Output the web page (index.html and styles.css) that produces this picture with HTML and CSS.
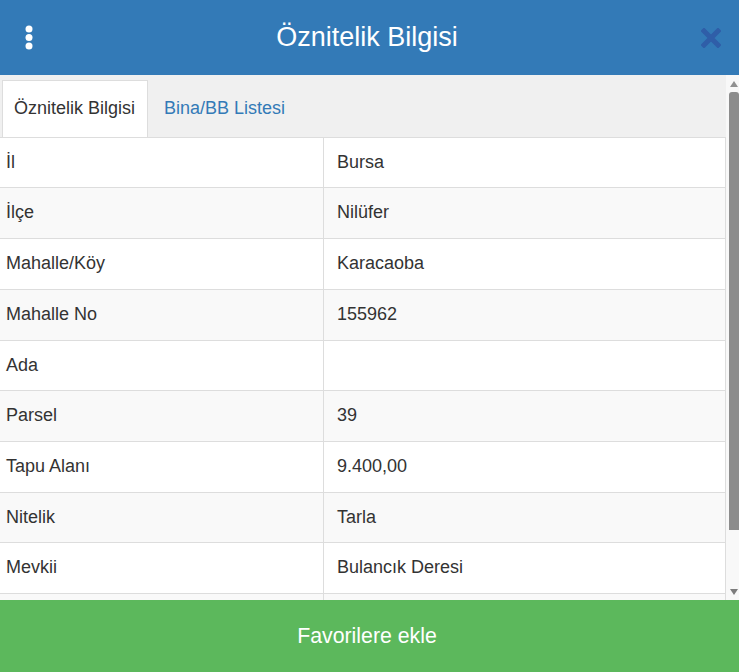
FILE: index.html
```html
<!DOCTYPE html>
<html lang="tr">
<head>
  <meta charset="UTF-8">
  <title>Öznitelik Bilgisi</title>
  <link rel="stylesheet" href="styles.css">
</head>
<body>
  <div class="panel">
    <header class="panel-header">
      <button class="icon-btn menu-btn" aria-label="Menü">
        <svg width="8" height="26" viewBox="0 0 8 26">
          <circle cx="4" cy="4" r="3.5" fill="#fff"/>
          <circle cx="4" cy="12.5" r="3.5" fill="#fff"/>
          <circle cx="4" cy="21" r="3.5" fill="#fff"/>
        </svg>
      </button>
      <h1 class="panel-title">Öznitelik Bilgisi</h1>
      <button class="icon-btn close-btn" aria-label="Kapat">
        <svg width="20" height="20" viewBox="0 0 20 20">
          <path d="M3 3L17 17M17 3L3 17" stroke="#2f5ea8" stroke-width="5" stroke-linecap="square"/>
        </svg>
      </button>
    </header>

    <div class="panel-body">
      <div class="scroll-area">
        <ul class="tabs">
          <li class="tab active">Öznitelik Bilgisi</li>
          <li class="tab">Bina/BB Listesi</li>
        </ul>

        <table class="attr-table">
          <tr><td>İl</td><td>Bursa</td></tr>
          <tr><td>İlçe</td><td>Nilüfer</td></tr>
          <tr><td>Mahalle/Köy</td><td>Karacaoba</td></tr>
          <tr><td>Mahalle No</td><td>155962</td></tr>
          <tr><td>Ada</td><td></td></tr>
          <tr><td>Parsel</td><td>39</td></tr>
          <tr><td>Tapu Alanı</td><td>9.400,00</td></tr>
          <tr><td>Nitelik</td><td>Tarla</td></tr>
          <tr><td>Mevkii</td><td>Bulancık Deresi</td></tr>
          <tr><td></td><td></td></tr>
        </table>
      </div>

      <!-- scrollbar drawn by hand, the browser hides the native one -->
      <div class="scrollbar">
        <div class="sb-btn"><span class="arrow-up"></span></div>
        <div class="sb-track"><div class="sb-thumb"></div></div>
        <div class="sb-btn"><span class="arrow-down"></span></div>
      </div>
    </div>

    <button class="fav-btn">Favorilere ekle</button>
  </div>
</body>
</html>
```

FILE: styles.css
```css
body {
  margin: 0;
  font-family: 'Liberation Sans', Arial, sans-serif;
  font-size: 18px;
  color: #333;
  background: #fff;
}
.panel {
  height: 672px;
  display: flex;
  flex-direction: column;
}
/* Blue title bar */
.panel-header {
  height: 75px;
  flex: none;
  background: #337ab7;
  display: grid;
  grid-template-columns: 55px 1fr 60px;
  align-items: center;
}
.icon-btn {
  border: 0;
  background: none;
  padding: 0;
  display: flex;
  cursor: pointer;
}
.menu-btn {
  padding-left: 25px;
  margin-top: 1px;
}
.close-btn {
  padding-left: 22px;
  margin-top: 1px;
}
.panel-title {
  margin: 0;
  text-align: center;
  font-size: 27px;
  font-weight: normal;
  color: #fff;
}
/* Middle part: content + scrollbar */
.panel-body {
  flex: 1;
  min-height: 0;
  display: flex;
}
.scroll-area {
  flex: 1;
  min-width: 0;
  overflow: hidden;
}
.scrollbar {
  width: 13px;
  flex: none;
  display: flex;
  flex-direction: column;
  background: #f8f8f8;
}
.sb-btn {
  height: 17px;
  flex: none;
  display: flex;
  align-items: center;
  justify-content: center;
  padding-left: 3px;
}
.arrow-up {
  border-left: 4px solid transparent;
  border-right: 4px solid transparent;
  border-bottom: 6px solid #909090;
}
.arrow-down {
  border-left: 4px solid transparent;
  border-right: 4px solid transparent;
  border-top: 6px solid #7c7c7c;
}
.sb-track {
  flex: 1;
}
.sb-thumb {
  height: 438px;
  margin-left: 3px;
  background: #8c8c8c;
  border-radius: 3px 3px 0 0;
}
/* Tabs */
.tabs {
  list-style: none;
  margin: 0;
  padding: 5px 0 0 2px;
  display: flex;
  background: #f0f0f0;
  border-bottom: 1px solid #ddd;
}
.tab {
  padding: 15px 12px 15px 11px;
  line-height: 25.7px;
  color: #337ab7;
  border: 1px solid transparent;
  border-bottom: 0;
  margin-right: 4px;
}
.tab.active {
  color: #333;
  background: #fff;
  border-color: #ddd;
}
/* Attribute table */
.attr-table {
  width: 100%;
  border-collapse: separate;
  border-spacing: 0;
  font-size: 18px;
}
.attr-table td {
  padding: 12px 13px;
  line-height: 25.7px;
  border-bottom: 1px solid #ddd;
  border-right: 1px solid #ddd;
}
.attr-table td:first-child {
  width: 324px;
  box-sizing: border-box;
  padding-left: 6px;
}
.attr-table tr:nth-child(even) td {
  background: #f9f9f9;
}
/* Green action button */
.fav-btn {
  flex: none;
  height: 72px;
  border: 0;
  padding: 0 5px 0 0;
  background: #5cb85c;
  color: #fff;
  font-family: inherit;
  font-size: 21.3px;
  cursor: pointer;
}
```
